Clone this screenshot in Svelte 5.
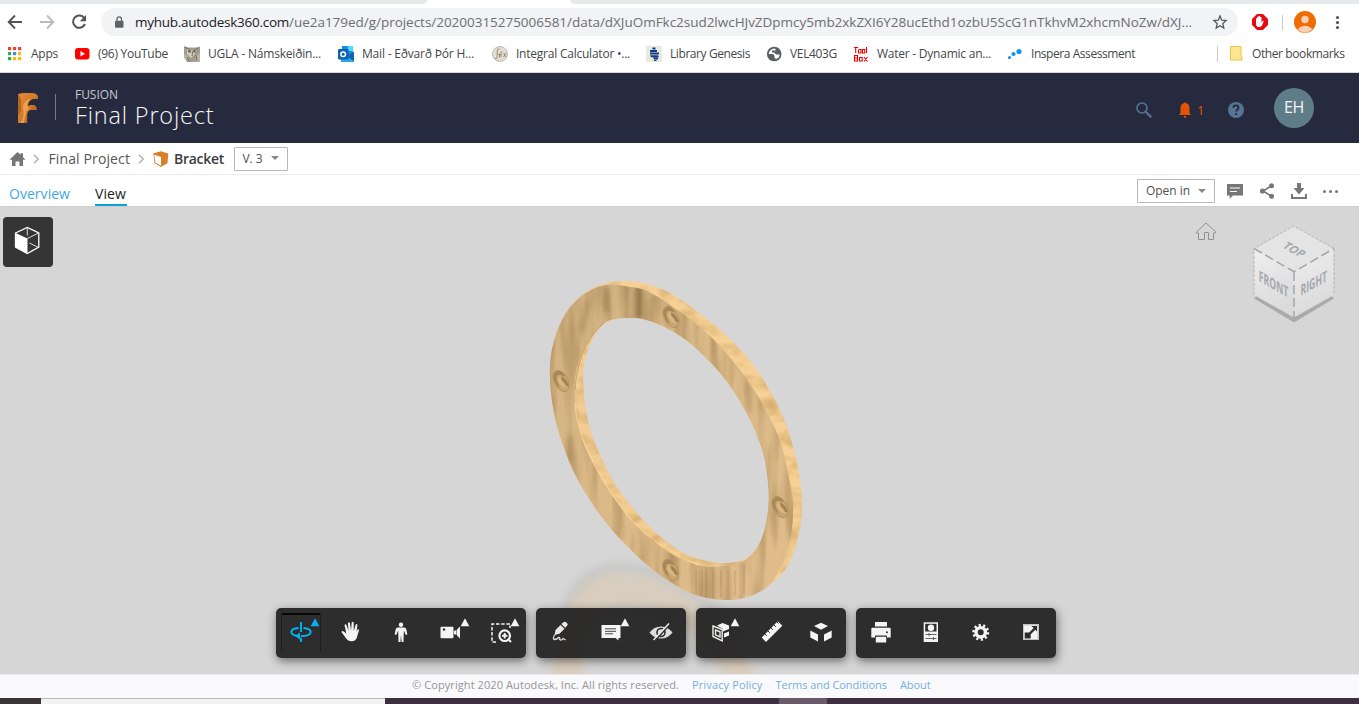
<script>
  // Tracks a label out (or in) so that it fills the given width in pixels.
  function fit(node, width) {
    const natural = node.getBoundingClientRect().width;
    const n = [...node.textContent].length;
    node.style.letterSpacing = `${(width - natural) / n}px`;
  }

  // Closed Catmull-Rom spline through a list of points.
  function spline(p) {
    const n = p.length;
    let d = `M${p[0][0]} ${p[0][1]}`;
    for (let i = 0; i < n; i++) {
      const a = p[(i + n - 1) % n], b = p[i], c = p[(i + 1) % n], e = p[(i + 2) % n];
      const f = (v) => v.toFixed(1);
      d += `C${f(b[0] + (c[0] - a[0]) / 6)} ${f(b[1] + (c[1] - a[1]) / 6)} ${f(c[0] - (e[0] - b[0]) / 6)} ${f(c[1] - (e[1] - b[1]) / 6)} ${c[0]} ${c[1]}`;
    }
    return d + 'Z';
  }

  const silhouette = spline([[623,281],[645,283.5],[670,293],[698,312],[730,339],[757,370],[780,410],[793,446],[800,480],[802,510],[798,538],[787,567],[767,587],[745,597.5],[723,600],[699,596],[677,586],[647,565],[613,531],[590,500],[573,470],[559,433],[551,393],[551,355],[562,320],[580,297],[600,285]]);
  const face = spline([[605,285],[627,286.5],[650,292.5],[687,317],[717,343],[743,374],[763,405],[780,441],[789,478],[793,505],[791,535],[782,565],[767,587],[745,597.5],[723,600],[699,596],[677,586],[647,565],[613,531],[590,500],[573,470],[559,433],[551,393],[551,355],[562,320],[580,297]]);
  const bore = spline([[627,318],[604,323],[586,345],[576,372],[575,403],[580,430],[588,453],[607,488],[630,519],[653,541],[677,557],[700,565.5],[720,566.5],[737,563.5],[748,558],[760,542],[766,522],[768.5,500],[767,475],[762,450],[750,420],[730,386],[707,359],[680,336],[651,321.5]]);
  const hole = spline([[627,318],[605,323.5],[591,342],[583.5,370],[585,403],[590,428],[598,450],[617,487],[647,524],[680,551],[707,561],[727,563],[747,558],[760,542],[766,522],[768.5,500],[767,475],[762,450],[750,420],[730,386],[707,359],[680,336],[651,321.5]]);
  const screws = [[671,317],[561,381],[780,507],[670.5,570]];

  const bookmarks = [
    ['apps', 'Apps', 27], ['youtube', '(96) YouTube', 70], ['owl', 'UGLA - Námskeiðin...', 113],
    ['outlook', 'Mail - Eðvarð Þór H...', 112], ['integral', 'Integral Calculator •...', 114],
    ['libgen', 'Library Genesis', 80], ['globe', 'VEL403G', 47],
    ['toolbox', 'Water - Dynamic an...', 114], ['inspera', 'Inspera Assessment', 104]
  ];
  const appColors = ['#ea4335','#ea4335','#ea4335','#34a853','#4285f4','#fbbc05','#34a853','#fbbc05','#fbbc05'];

  const tools = [
    ['orbit', 'pan', 'walk', 'camera', 'zoom'],
    ['markup', 'comment', 'hide'],
    ['section', 'measure', 'explode'],
    ['print', 'props', 'settings', 'full']
  ];
  const menus = ['orbit', 'camera', 'zoom', 'comment', 'section'];
</script>

<div class="page">
  <div class="strip"><i class="tabs-a"></i><i class="tab"></i><i class="tabs-b"></i></div>

  <div class="chrome">
    <svg class="nav" width="100" height="36" viewBox="0 4 100 36" fill="none" stroke-width="1.9">
      <path d="M22 22H9M15 15.5L8.7 22l6.300 6.500" stroke="#505357" />
      <path d="M40 22h13M47 15.500l6.300 6.500-6.300 6.500" stroke="#b9bbbd" />
      <path d="M84.300 18A6.200 6.200 0 1 0 85 24" stroke="#505357" stroke-width="2" />
      <path d="M86 15v6.200h-6.200z" fill="#505357" />
    </svg>
    <div class="omnibox">
      <svg width="10" height="13" viewBox="0 0 10 13"><rect x="1" y="4.800" width="8.500" height="7" rx="1" fill="#5f6368" /><path d="M3 5V3.200a2.200 2.200 0 0 1 4.500 0V5" fill="none" stroke="#5f6368" stroke-width="1.300" /></svg>
      <div class="url"><b use:fit={154}>myhub.autodesk360.com</b><span use:fit={903}>/ue2a179ed/g/projects/20200315275006581/data/dXJuOmFkc2sud2lwcHJvZDpmcy5mb2xkZXI6Y28ucEthd1ozbU5ScG1nTkhvM2xhcmNoZw/dXJ...</span></div>
      <svg width="16" height="16" viewBox="0 0 16 16"><path d="M8 1.900l1.700 4.300 4.500.4-3.400 3 1 4.500L8 11.700l-3.800 2.400 1-4.500-3.400-3 4.500-.4z" fill="none" stroke="#55585c" stroke-width="1.300" /></svg>
    </div>
    <svg class="ext" width="121" height="36" viewBox="1238 4 121 36">
      <path d="M1257 14h6l5 5v6l-5 5h-6l-5-5v-6z" fill="#e60b12" />
      <path d="M1256 22v-3.500q.8-1 1.200 0V17q.9-1 1.400 0v-.8q.8-1 1.500 0v1q.9-.8 1.400.2v5l1-1.400q1.200-.6 1.300.2l-2 4.500q-3.500 3-5.800-.5z" fill="#fff" />
      <path d="M1282.500 15v15" stroke="#c9cbcd" />
      <circle cx="1305" cy="22" r="11" fill="#ef6c00" /><circle cx="1305" cy="19.500" r="3.700" fill="#fbd0b4" /><path d="M1297.500 29q7.500-6.500 15 0q-7.500 7.500-15 0" fill="#fbd0b4" />
      <g fill="#505357"><circle cx="1337.500" cy="17.500" r="1.600" /><circle cx="1337.500" cy="22.500" r="1.600" /><circle cx="1337.500" cy="27.500" r="1.600" /></g>
    </svg>
  </div>

  <div class="bookmarks">
    {#each bookmarks as [icon, label, width]}
      <div class="mark">
        <svg width="16" height="16" viewBox="0 0 16 16">
          {#if icon === 'apps'}
            {#each appColors as c, i}<rect x={1 + (i % 3) * 5} y={1 + Math.floor(i / 3) * 5} width="3.200" height="3.200" fill={c} />{/each}
          {:else if icon === 'youtube'}
            <rect x="1" y="2" width="14.500" height="11.500" rx="3" fill="#f00" /><path d="M6.500 5l4.500 2.800-4.500 2.800z" fill="#fff" />
          {:else if icon === 'owl'}
            <path d="M0 0l3 1.500h9L16 .5V16H3L0 11z" fill="#a19c8c" /><path d="M0 8l4 2 0 5-4-3zM12 10l4-3v9h-5z" fill="#bdb49e" /><path d="M3 3l4 2 5-2-1 5-4 4-4-4z" fill="#d3cec1" /><path d="M1 1l4 2 2 4M14 2l-5 3-1 5M3 11l2 4M12 9l1 6" fill="none" stroke="#6a6658" stroke-width=".9" /><circle cx="5" cy="5.500" r="1" fill="#45423a" /><circle cx="10.500" cy="5.500" r="1" fill="#45423a" />
          {:else if icon === 'outlook'}
            <path d="M4 0h11v10H4z" fill="#1490df" /><path d="M10 0h5v5h-5z" fill="#50d9ff" /><path d="M3 6l7 4 6-4v10H3z" fill="#28a8ea" /><path d="M16 6v9L8 10z" fill="#1066b5" /><rect y="3" width="10.500" height="10.500" rx="1" fill="#0f62af" /><circle cx="5.200" cy="8.200" r="2.300" fill="none" stroke="#fff" stroke-width="1.500" />
          {:else if icon === 'integral'}
            <circle cx="8" cy="8" r="7.500" fill="#e2ddd0" stroke="#b5ae9f" stroke-width=".8" /><path d="M7.500 3Q5.500 2 5.200 5v5.500Q5 13.500 3 12.500M7.500 7.500v4M6.500 8.500H9M10 5Q8.500 6 9 11M11.500 11l2.500-4M11.500 7l2.500 4" fill="none" stroke="#8d8678" stroke-width=".9" />
          {:else if icon === 'libgen'}
            <rect width="16" height="16" fill="#e9eadf" /><path d="M6.500 1.500h3v2h-3zM4 4h7v2H4zM4 6.500h9v2H4zM4 9.200h8l1 2H5zM7 11.500h5v2H8zM8 14h2.500v1H8z" fill="#123b83" />
          {:else if icon === 'globe'}
            <circle cx="8.200" cy="8" r="7.300" fill="#5b5e62" /><path d="M8.200 2.500Q3 3.500 2.700 8H6.500q2 .3 2 2.500v1.500l1.500 1q3.500-1 3.700-4.500H10.500Q8.500 8 8.500 6.500H6V4.500h3.500V3z" fill="#fff" />  <path d="M3 8.500L7 12v1.700Q3.500 13 3 8.500" fill="#5b5e62" />
          {:else if icon === 'toolbox'}
            <path d="M1 1.500h4M2.700 1.500V7M6 3.500h2V7H5.500V3.500M9.500 3.500h2.200V7H9.500zM13.500 1v6M1.500 9.500h3v5.500h-3zM1.500 12h3M6.500 11.500h2.700V15H6.500zM11 11l3.500 4.500M14.500 11L11 15.500" fill="none" stroke="#f00000" stroke-width="1.100" />
          {:else}
            <g fill="#0c95ea"><circle cx="2.500" cy="11.500" r="1.600" /><circle cx="6.500" cy="8" r="2.100" /><circle cx="12" cy="5.500" r="2.600" /></g>
          {/if}
        </svg>
        <span use:fit={width}>{label}</span>
      </div>
    {/each}
    <div class="other">
      <svg width="13" height="15" viewBox="0 0 13 15"><path d="M.5.500h10.500v9.500l1 .8v3.200H.5z" fill="#ffe694" stroke="#e9c443" /></svg>
      <span use:fit={92.500}>Other bookmarks</span>
    </div>
  </div>

  <header>
    <svg width="22" height="32" viewBox="0 0 22 32">
      <defs><linearGradient id="fg" x2="1" y2="1"><stop stop-color="#e68a31" /><stop offset=".5" stop-color="#d27a2a" /><stop offset="1" stop-color="#93501f" /></linearGradient></defs>
      <path d="M1 2l5-1h10.500Q20 2 21 4v3h-5.500Q11.500 8 11 14l2-1h4.500q2.500 1.500 2.500 5h-6.500Q10.500 19 10.200 22V31L1 31z" fill="url(#fg)" />
      <path d="M3 31Q8 25 6 15Q7 7 16 7L12 9Q9.500 11 10.500 14.500L13 16.500Q9 18 9 22L7 31z" fill="#f8bd68" opacity=".6" /><path d="M1 2l3 5v12l-3 4z" fill="#b5651f" />
    </svg>
    <i></i>
    <div class="title"><small><span use:fit={43}>FUSION</span></small><h1><span use:fit={139.500}>Final Project</span></h1></div>
    <svg class="actions" width="80" height="24" viewBox="1134 98 80 24">
      <circle cx="1142" cy="108" r="5" fill="none" stroke="#587492" stroke-width="1.600" /><path d="M1145.700 111.700l5.500 5.500" stroke="#587492" stroke-width="2.200" />
      <path d="M1184 103q1-1.500 2 0q3.500 1 3.500 5v5l1.500 2H1179l1.500-2v-5q0-4 3.500-5zM1183.500 116h3q-.5 2-1.500 2t-1.500-2" fill="#e35205" />
      <text x="1197" y="115">1</text>
    </svg>
    <svg class="help" width="18" height="18" viewBox="0 0 18 18"><circle cx="9" cy="9" r="8" fill="#587492" /><path d="M6.300 6.800Q6.500 4.300 9 4.300t2.600 2.300c0 1.800-2.400 2-2.400 4M9.200 12v2" fill="none" stroke="#252a3f" stroke-width="1.800" /></svg>
    <div class="avatar"><span use:fit={20}>EH</span></div>
  </header>

  <nav class="crumbs">
    <svg width="17" height="16" viewBox="0 0 17 16"><path d="M8.500 1l3 2.800V2.200H14v4l2.500 2.600H14V15h-3.500v-4.500h-4V15H3V8.800H.5z" fill="#767676" /></svg>
    <svg class="chev" width="7" height="10" viewBox="0 0 7 10"><path d="M1 .8L5.200 5 1 9.200" fill="none" stroke="#b4b4b4" stroke-width="1.600" /></svg>
    <span class="c1"><span use:fit={81.500}>Final Project</span></span>
    <svg class="chev" width="7" height="10" viewBox="0 0 7 10"><path d="M1 .8L5.200 5 1 9.200" fill="none" stroke="#b4b4b4" stroke-width="1.600" /></svg>
    <svg class="part" width="16" height="16" viewBox="0 0 16 16"><path d="M.3 2.500l7.500-2.300L15.300 2.500l-.8 9.700-6.700 3.700L1.500 12z" fill="#d97f2c" /><path d="M1.200 3.700L8 6v8.800L2.400 11.400z" fill="#fff" /></svg>
    <strong><span use:fit={50}>Bracket</span></strong>
    <button class="version"><span use:fit={20}>V. 3</span><em></em></button>
  </nav>

  <div class="tabs">
    <a href="#overview" class="over"><span use:fit={61}>Overview</span></a>
    <a href="#view" class="view"><span use:fit={31}>View</span></a>
    <button class="openin"><span use:fit={44}>Open in</span><em></em></button>
    <svg width="144" height="28" viewBox="1215 178 144 28" fill="#777">
      <path d="M1227 184h16v11.500h-10l-3.300 3.300v-3.300H1227z" /><path d="M1230 188h10M1230 191.500h7" stroke="#fff" stroke-width="1.200" />
      <path d="M1271.500 185.800L1263 191l8.500 5.300" fill="none" stroke="#777" stroke-width="1.600" /><circle cx="1271.500" cy="185.800" r="2.500" /><circle cx="1262.500" cy="191" r="2.600" /><circle cx="1271.500" cy="196.300" r="2.500" />
      <path d="M1297 183h4v5h3.500l-5.500 6.500-5.500-6.500h3.500zM1291 194h2v3h12v-3h2v5h-16z" />
      <circle cx="1324.500" cy="191.500" r="1.500" /><circle cx="1330.500" cy="191.500" r="1.500" /><circle cx="1336.500" cy="191.500" r="1.500" />
    </svg>
  </div>

  <main>
    <svg class="scene" width="1359" height="467" viewBox="0 207 1359 467">
      <defs>
        <filter id="wood" x="540" y="270" width="275" height="340" filterUnits="userSpaceOnUse" color-interpolation-filters="sRGB">
          <feTurbulence type="fractalNoise" baseFrequency=".09 .013" numOctaves="2" seed="8" />
          <feColorMatrix values="0 0 0 0 .58  0 0 0 0 .45  0 0 0 0 .28  1.100 0 0 0 -.42" />
          <feComposite in2="SourceGraphic" operator="in" result="grain" />
          <feMerge><feMergeNode in="SourceGraphic" /><feMergeNode in="grain" /></feMerge>
        </filter>
        <filter id="edge" x="540" y="270" width="275" height="340" filterUnits="userSpaceOnUse" color-interpolation-filters="sRGB">
          <feTurbulence type="fractalNoise" baseFrequency=".05 .09" numOctaves="2" seed="3" />
          <feColorMatrix values="0 0 0 0 .72  0 0 0 0 .55  0 0 0 0 .30  1.200 0 0 0 -.5" />
          <feComposite in2="SourceGraphic" operator="in" result="grain" />
          <feMerge><feMergeNode in="SourceGraphic" /><feMergeNode in="grain" /></feMerge>
        </filter>
        <filter id="soft" x="-50%" y="-50%" width="200%" height="200%"><feGaussianBlur stdDeviation="2.500" /></filter>
        <filter id="haze" x="-20%" y="-30%" width="140%" height="160%"><feGaussianBlur stdDeviation="4.500" /></filter>
        <linearGradient id="tone" x2="1" y2="1"><stop stop-color="#d0b07f" /><stop offset=".4" stop-color="#dab987" /><stop offset="1" stop-color="#e0bd8b" /></linearGradient>
        <mask id="open"><rect x="540" y="270" width="275" height="340" fill="#fff" /><path d={hole} fill="#000" /></mask>
        <clipPath id="facec"><path d={face} /></clipPath>
        <linearGradient id="cf" x2=".3" y2="1"><stop stop-color="#efefef" /><stop offset="1" stop-color="#dadada" /></linearGradient>
      </defs>
      <g filter="url(#haze)">
        <path d="M558 640C564 594 584 567 622 567C668 568 720 610 745 640" fill="none" stroke="#aaa7a2" stroke-width="8" opacity=".35" />
        <path d="M552 700C550 640 566 573 617 573C680 574 738 628 768 700L738 700C712 650 680 608 630 606C594 606 580 650 582 700Z" fill="#d8c8b2" opacity=".68" />
        <path d="M600 618Q635 596 668 625" fill="none" stroke="#aaa7a2" stroke-width="8" opacity=".3" />
      </g>
      <g mask="url(#open)">
        <path d={silhouette} fill="#f6d095" filter="url(#edge)" />
        <path d={face} fill="url(#tone)" filter="url(#wood)" />
        <g clip-path="url(#facec)">
          <g filter="url(#soft)" fill="none" stroke="#80643b">
            <path d="M639 285v34" stroke-width="8" opacity=".75" /><path d="M607 288v24" stroke-width="5" opacity=".5" /><path d="M588 300l-7 32" stroke-width="6" opacity=".3" /><path d="M749 385v27" stroke-width="4" opacity=".4" /><path d="M571 435v25" stroke-width="4" opacity=".4" /><path d="M653 295l-2 30" stroke-width="4" opacity=".5" />
          </g>
          <path d="M696 569v26M702 570v26M706 570v28M713 570v28M721 570v28M728 570v28M735 570v26M744 565v30" stroke="#a9834f" stroke-width="1.200" opacity=".4" />
        </g>
        <path d={bore} fill="#f2cc91" filter="url(#edge)" />
        <path d="M575 403C577 445 607 488 630 519C653 541 677 557 700 565.500" fill="none" stroke="#ffdfa6" stroke-width=".9" opacity=".7" />
        <path d="M604 323C586 339 577 360 575 390" fill="none" stroke="#9b794a" stroke-width="1" opacity=".5" />
        {#each screws as [x, y]}
          <g transform="translate({x} {y}) rotate(-28)">
            <ellipse rx="6.800" ry="11.500" fill="#c9a470" stroke="#97764a" stroke-opacity=".5" stroke-width=".8" />
            <path d="M-6 0Q-6-11 1-10.500Q6-9 5.500-2Q3-6 0-7Q-4-7-4 5Q-6 4-6 0" fill="#9a794c" opacity=".7" />
            <path d="M-3-2Q0-7 3-3Q5 3 2 8Q-2 8-3-2" fill="#d9b67e" />
            <path d="M2-4Q6 0 4.500 8Q1 7 2 3Q0 0 2-4" fill="#8d6c40" opacity=".7" />
          </g>
        {/each}
      </g>
      <path d="M1197 231.500l9-8.500 9.500 8.500v1.500h-2v6.500h-5v-7h-4v7h-6V233h-2z" fill="none" stroke="#909090" />
      <path d="M1254 298.500l3-3 37 20 37-20 3 3-40 24z" fill="#aaa" />
      <path d="M1294 226l40 22.500-40 23.200-40-23.200z" fill="#e4e4e4" />
      <path d="M1254 248.500l40 23.200V317.500l-40-22.500z" fill="url(#cf)" /><path d="M1334 248.500l-40 23.200V317.500l40-22.500z" fill="url(#cf)" />
      <path d="M1254 248.500l40 23.200 40-23.200M1294 272v46" fill="none" stroke="#a3a5a7" stroke-width="1.500" stroke-dasharray="9 4" />
      <path d="M1254 295v-46.500l40-22.500 40 22.500V295" fill="none" stroke="#aaa" stroke-dasharray="3 1.500" stroke-width=".8" />
      <g class="cube">
        <text transform="matrix(.64 .36 -.6 .52 1281.500 247)" font-size="15">TOP</text>
        <text transform="matrix(.58 .33 0 1 1258.800 281)" font-size="15">FRONT</text>
        <text transform="matrix(.58 -.33 0 1 1300.500 296)" font-size="15">RIGHT</text>
      </g>
    </svg>

    <button class="model" aria-label="Model browser">
      <svg width="50" height="50" viewBox="3 217 50 50"><path d="M15.500 233l11.800-5.500 11.500 5.500v14l-11.500 6.500-11.800-6.500z" fill="none" stroke="#fff" stroke-width="1.300" /><path d="M15.500 233l12 5.500v15l-12-6.500z" fill="#fff" /><path d="M27.300 238.500l11.500-5.500M27.300 227.500v8M29.500 243l9 4.500" stroke="#ddd" /></svg>
    </button>

    <div class="dock">
      {#each tools as group}
        <div class="group">
          {#each group as t}
            <div class="tool" class:active={t === 'orbit'}>
              <svg width="50" height="50" viewBox="0 0 50 50">
                {#if t === 'orbit'}
                  <path d="M22.500 20C17 20.500 15.300 22 15.300 24C15.300 26 18 27.500 22.500 28.300M27.500 20C32.500 20.500 34.700 22 34.700 24C34.700 26.500 31 28 25 28.200M25 14v10M25 30v4" fill="none" stroke="#00b4f5" stroke-width="1.900" /><path d="M24 24.500v7L19 28z" />
                {:else if t === 'pan'}
                  <path d="M20.500 31l-5-7q.7-1.700 2.300-.5l2.500 2L18.500 17q.8-1.600 2 0l2 6-.6-8q1-1.500 2 0l1.100 7.500.7-8q1-1.500 2 0v8.500l2-6.500q1.300-1 1.700.5L30.500 24l1-2.500q1.300-.8 1.500.7L31 29q-1 4-5 4.300-3.500.2-5.500-2.300" />
                {:else if t === 'walk'}
                  <circle cx="25" cy="16.700" r="2.200" /><path d="M21.500 19.500h7q1.500 0 2 2.500l.8 4.500-1.500.5-2-4.500-.3 11.500h-1.900L25 27l-.6 7h-1.900l-.3-11.500-2 4.500-1.500-.5.800-4.500q.5-2.500 2-2.500" />
                {:else if t === 'camera'}
                  <path d="M15.500 18.700h11q1 0 1 1v9.500q0 1-1 1h-11q-1 0-1-1v-9.500q0-1 1-1M28 23l2.500-1v5L28 26zM31 21.500l3-3v12l-3-3z" /><circle cx="18" cy="21.500" r="1.200" fill="#2d2d2d" />
                {:else if t === 'zoom'}
                  <path d="M20 34h-4V16h18v4" fill="none" stroke="#f4f4f4" stroke-width="1.500" stroke-dasharray="3.500 1.700" /><circle cx="28.700" cy="27.700" r="5.300" fill="none" stroke="#f4f4f4" stroke-width="2.200" /><path d="M28.700 25v5.400M26 27.700h5.400M32 31l3 3" fill="none" stroke="#f4f4f4" stroke-width="1.900" />
                {:else if t === 'markup'}
                  <path d="M18.500 27l1-5 5-5 4 3.700-5 5zM25.300 16l2.500-2.100q1.200-.7 2.300.4l1.200 1.200q.8 1-.1 2.100l-2 2.200z" fill="#e8e8e8" /><path d="M19 26.500Q16 31 18.500 31.500Q21 31.500 22.500 29.500Q24.500 29 23.500 31.500Q25.500 33 27 30.500L29.500 31.800" fill="none" stroke="#ddd" stroke-width="1.300" />
                {:else if t === 'comment'}
                  <path d="M15.500 17h19v13h-2V32.500l-3-2.500h-14z" /><path d="M19 20.800h11M19 23.300h11M19 25.800h8" stroke="#444" stroke-width="1" />
                {:else if t === 'hide'}
                  <path d="M13.500 24.500Q18 18.500 25 18.500t11.500 6Q32 30.500 25 30.500t-11.500-6" fill="#ddd" /><circle cx="25" cy="24.500" r="4" fill="none" stroke="#2d2d2d" stroke-width="1.600" /><path d="M18.800 33L34 16.300" stroke="#2d2d2d" stroke-width="1.600" /><path d="M17.500 32L33 15.500" stroke="#eee" stroke-width="1.500" />
                {:else if t === 'section'}
                  <path d="M21 17.500l5.500-2.500 6.500 2.500v3.500l-6 2.500v-2.500zM28 25.500l5-2v4l-5 2z" /><path d="M17 18l9.200 3.500v11.300L17 28.500zM19.500 22l4.500 1.800v5l-4.500-2z" fill="none" stroke="#eee" stroke-width="1.400" />
                {:else if t === 'measure'}
                  <path d="M15.700 29.500L31.800 13.200l4.500 4.500L20 34z" /><path d="M19 26l1.800 1.800M22 23l1.800 1.800M25 20l1.800 1.800M28 17l1.800 1.800M31 14l1.500 1.500" stroke="#2d2d2d" />
                {:else if t === 'explode'}
                  <path d="M25 14.700l7 3.300-7 3.700-7-3.700zM14.300 22.500l7.700 4v7l-7.700-4zM35.700 22.500l-7.700 4v7l7.700-4z" />
                {:else if t === 'print'}
                  <path d="M19 14h12v4.500H19zM16.500 19.800h17q1.200 0 1.200 1.200v8.500H31v-2H19v2h-3.700V21q0-1.200 1.200-1.200M19.800 28.800h10.400v5.800H19.800z" /><circle cx="31" cy="24.300" r="1" fill="#2d2d2d" />
                {:else if t === 'props'}
                  <path d="M17.700 14.300H32V34H17.700z" /><path d="M19.200 15.800h11.300v7.700H19.200z" fill="#2d2d2d" /><circle cx="25" cy="19.700" r="3.200" /><path d="M19.500 26.500h11M19.500 30.500h11M23 25v3M27.500 29v3" stroke="#666" stroke-width="1.100" />
                {:else if t === 'settings'}
                  <circle cx="24.700" cy="24.300" r="4.700" fill="none" stroke="#f4f4f4" stroke-width="3.400" /><circle cx="24.700" cy="24.300" r="7" fill="none" stroke="#f4f4f4" stroke-width="3" stroke-dasharray="2.100 2.298" />
                {:else}
                  <path d="M17 16h16v16H17z" fill="#c4c4c4" /><path d="M18 17.500h13.500V31H18z" /><path d="M18.700 24.500h6v6h-6zM25.500 18H31v5.500l-1.700-1.700-4.500 4.400-1.600-1.600 4.400-4.500z" fill="#2d2d2d" />
                {/if}
                {#if menus.includes(t)}<path d="M34.700 18.300h8.600L39 10.300z" />{/if}
              </svg>
            </div>
          {/each}
        </div>
      {/each}
    </div>
  </main>

  <footer>
    <span class="f1"><span use:fit={267}>© Copyright 2020 Autodesk, Inc. All rights reserved.</span></span>
    <a href="#privacy"><span use:fit={70.500}>Privacy Policy</span></a>
    <a href="#terms"><span use:fit={111.500}>Terms and Conditions</span></a>
    <a href="#about"><span use:fit={30.500}>About</span></a>
  </footer>
  <div class="taskbar"><i></i><i></i><i></i><i></i><i></i></div>
</div>

<style>
  :global(body) { margin: 0; overflow: hidden; }
  * { box-sizing: border-box; }
  .page { width: 1359px; height: 704px; display: flex; flex-direction: column; overflow: hidden; background: #fff; font-family: "Open Sans", "Noto Sans", sans-serif; color: #3c4043; white-space: nowrap; }
  .page > * { flex: none; }
  svg { display: block; flex: none; }
  span { display: inline-block; }
  a { text-decoration: none; }
  button { font: inherit; padding: 0; margin: 0; background: #fff; }
  .strip { height: 4px; display: flex; background: #fff; }
  .tabs-a { width: 427px; background: #e7eaed; border-radius: 0 0 5px 0; }
  .tab { width: 143px; }
  .tabs-b { flex: 1; background: #e7eaed; border-radius: 0 0 0 5px; }
  .chrome { height: 36px; display: flex; align-items: center; }
  .omnibox { width: 1137px; margin-left: 1px; height: 28px; border-radius: 14px; background: #f1f3f4; display: flex; align-items: center; padding: 0 10px 0 13px; }
  .url { width: 1068px; margin-left: 11px; font-size: 13.500px; line-height: 20px; flex: none; margin-right: 9px; color: #6c6f73; }
  .url b { display: inline-block; font-weight: 400; color: #202124; }
  .bookmarks { height: 33px; padding: 0 0 5px 7px; border-bottom: 1px solid #d6d7dc; display: grid; grid-template-columns: 67px 110px 154px 154px 154px 120px 87px 154px 210px 1fr; align-items: center; font-size: 12px; color: #44474a; }
  .mark { display: flex; gap: 8px; align-items: center; }
  .other { display: flex; align-items: center; border-left: 1px solid #ccc; height: 16px; padding-left: 12px; gap: 9px; }
  header { height: 70px; background: #252a3f; display: flex; align-items: center; padding-left: 17px; color: #f5f5f7; }
  header > i { width: 1px; height: 26px; background: #777b88; margin: 0 0 2px 16px; }
  .title { width: 200px; margin-left: 19px; padding-bottom: 4px; }
  .title small { display: block; font-size: 12px; line-height: 17px; height: 17px; color: #c9cad0; }
  .title h1 { margin: 0; font-size: 23.500px; line-height: 24px; height: 24px; font-weight: 300; }
  .title span { display: block; width: max-content; }
  .actions { margin: 4px 0 0 859px; }
  .actions text { font-size: 13px; fill: #e35205; }
  .help { margin: 4px 0 0 13px; }
  .avatar { margin: 0 0 1px 29px; width: 40px; height: 40px; border-radius: 50%; background: #5f7d89; display: flex; justify-content: center; align-items: center; font-size: 16px; padding-bottom: 2px; }
  .crumbs { height: 32px; border-bottom: 1px solid #e9e9e9; display: flex; align-items: center; padding-left: 8.500px; font-size: 14px; color: #565656; }
  .chev { margin-left: 7px; }
  .c1 { margin-left: 9px; width: 89.500px; }
  .c1 + .chev { margin-left: 0; }
  .part { margin-left: 8px; }
  strong { margin-left: 5px; width: 59.500px; font-weight: 600; color: #3c3c3c; }
  .version, .openin { border: 1px solid #b8b8b8; border-radius: 1px; height: 24px; display: flex; align-items: center; justify-content: space-between; padding: 0 8px 1px; font-size: 12px; color: #505050; }
  .version { width: 54px; }
  em { border: 4px solid transparent; border-top: 4.500px solid #888; border-bottom: 0; }
  .tabs { height: 32px; display: flex; align-items: flex-start; font-size: 14px; border-bottom: 1px solid #cfcfcf; }
  .tabs a { height: 31px; padding-top: 9px; line-height: 20px; }
  .over { margin-left: 9px; width: 86px; color: #3fa9df; }
  .view { width: 32px; border-bottom: 2px solid #0ba4da; color: #222; }
  .openin { width: 78px; margin: 4px 0 0 1010px; }
  .tabs svg { margin-top: 3px; }
  main { height: 467px; position: relative; background: #d6d6d6; overflow: hidden; }
  .cube { font-family: "Open Sans", sans-serif; font-weight: 700; fill: #a5a8ac; }
  .model { position: absolute; left: 3px; top: 10px; width: 50px; height: 50px; border: 0; border-radius: 4px; background: #353535; }
  .dock { position: absolute; left: 276px; top: 401px; display: flex; gap: 10px; }
  .group { display: flex; background: rgba(34,34,34,.94); border-radius: 5px; box-shadow: 1px 3px 10px rgba(0,0,0,.5); }
  .tool { position: relative; fill: #f4f4f4; }
  .active { fill: #00b4f5; }
  .active::before { content: ""; position: absolute; inset: 5px; border: 1px solid #1e1e1e; border-top: 2px solid #080808; border-bottom: 0; border-radius: 2px; }
  .active svg { position: relative; }
  footer { height: 24px; background: #fafafc; border-top: 1px solid #e9e9eb; display: flex; padding-left: 412px; font-size: 11px; line-height: 20px; color: #959595; }
  footer a { color: #74aede; margin-left: 13px; }
  .taskbar { height: 6px; display: grid; grid-template-columns: 41px 344px 394px 48px 1fr; background: #3e2f40; }
  .taskbar i:nth-child(1) { background: #3a3637; }
  .taskbar i:nth-child(2) { background: #f2f2f2; border-top: 1px solid #bbb; }
  .taskbar i:nth-child(4) { background: #685a69; }
</style>
